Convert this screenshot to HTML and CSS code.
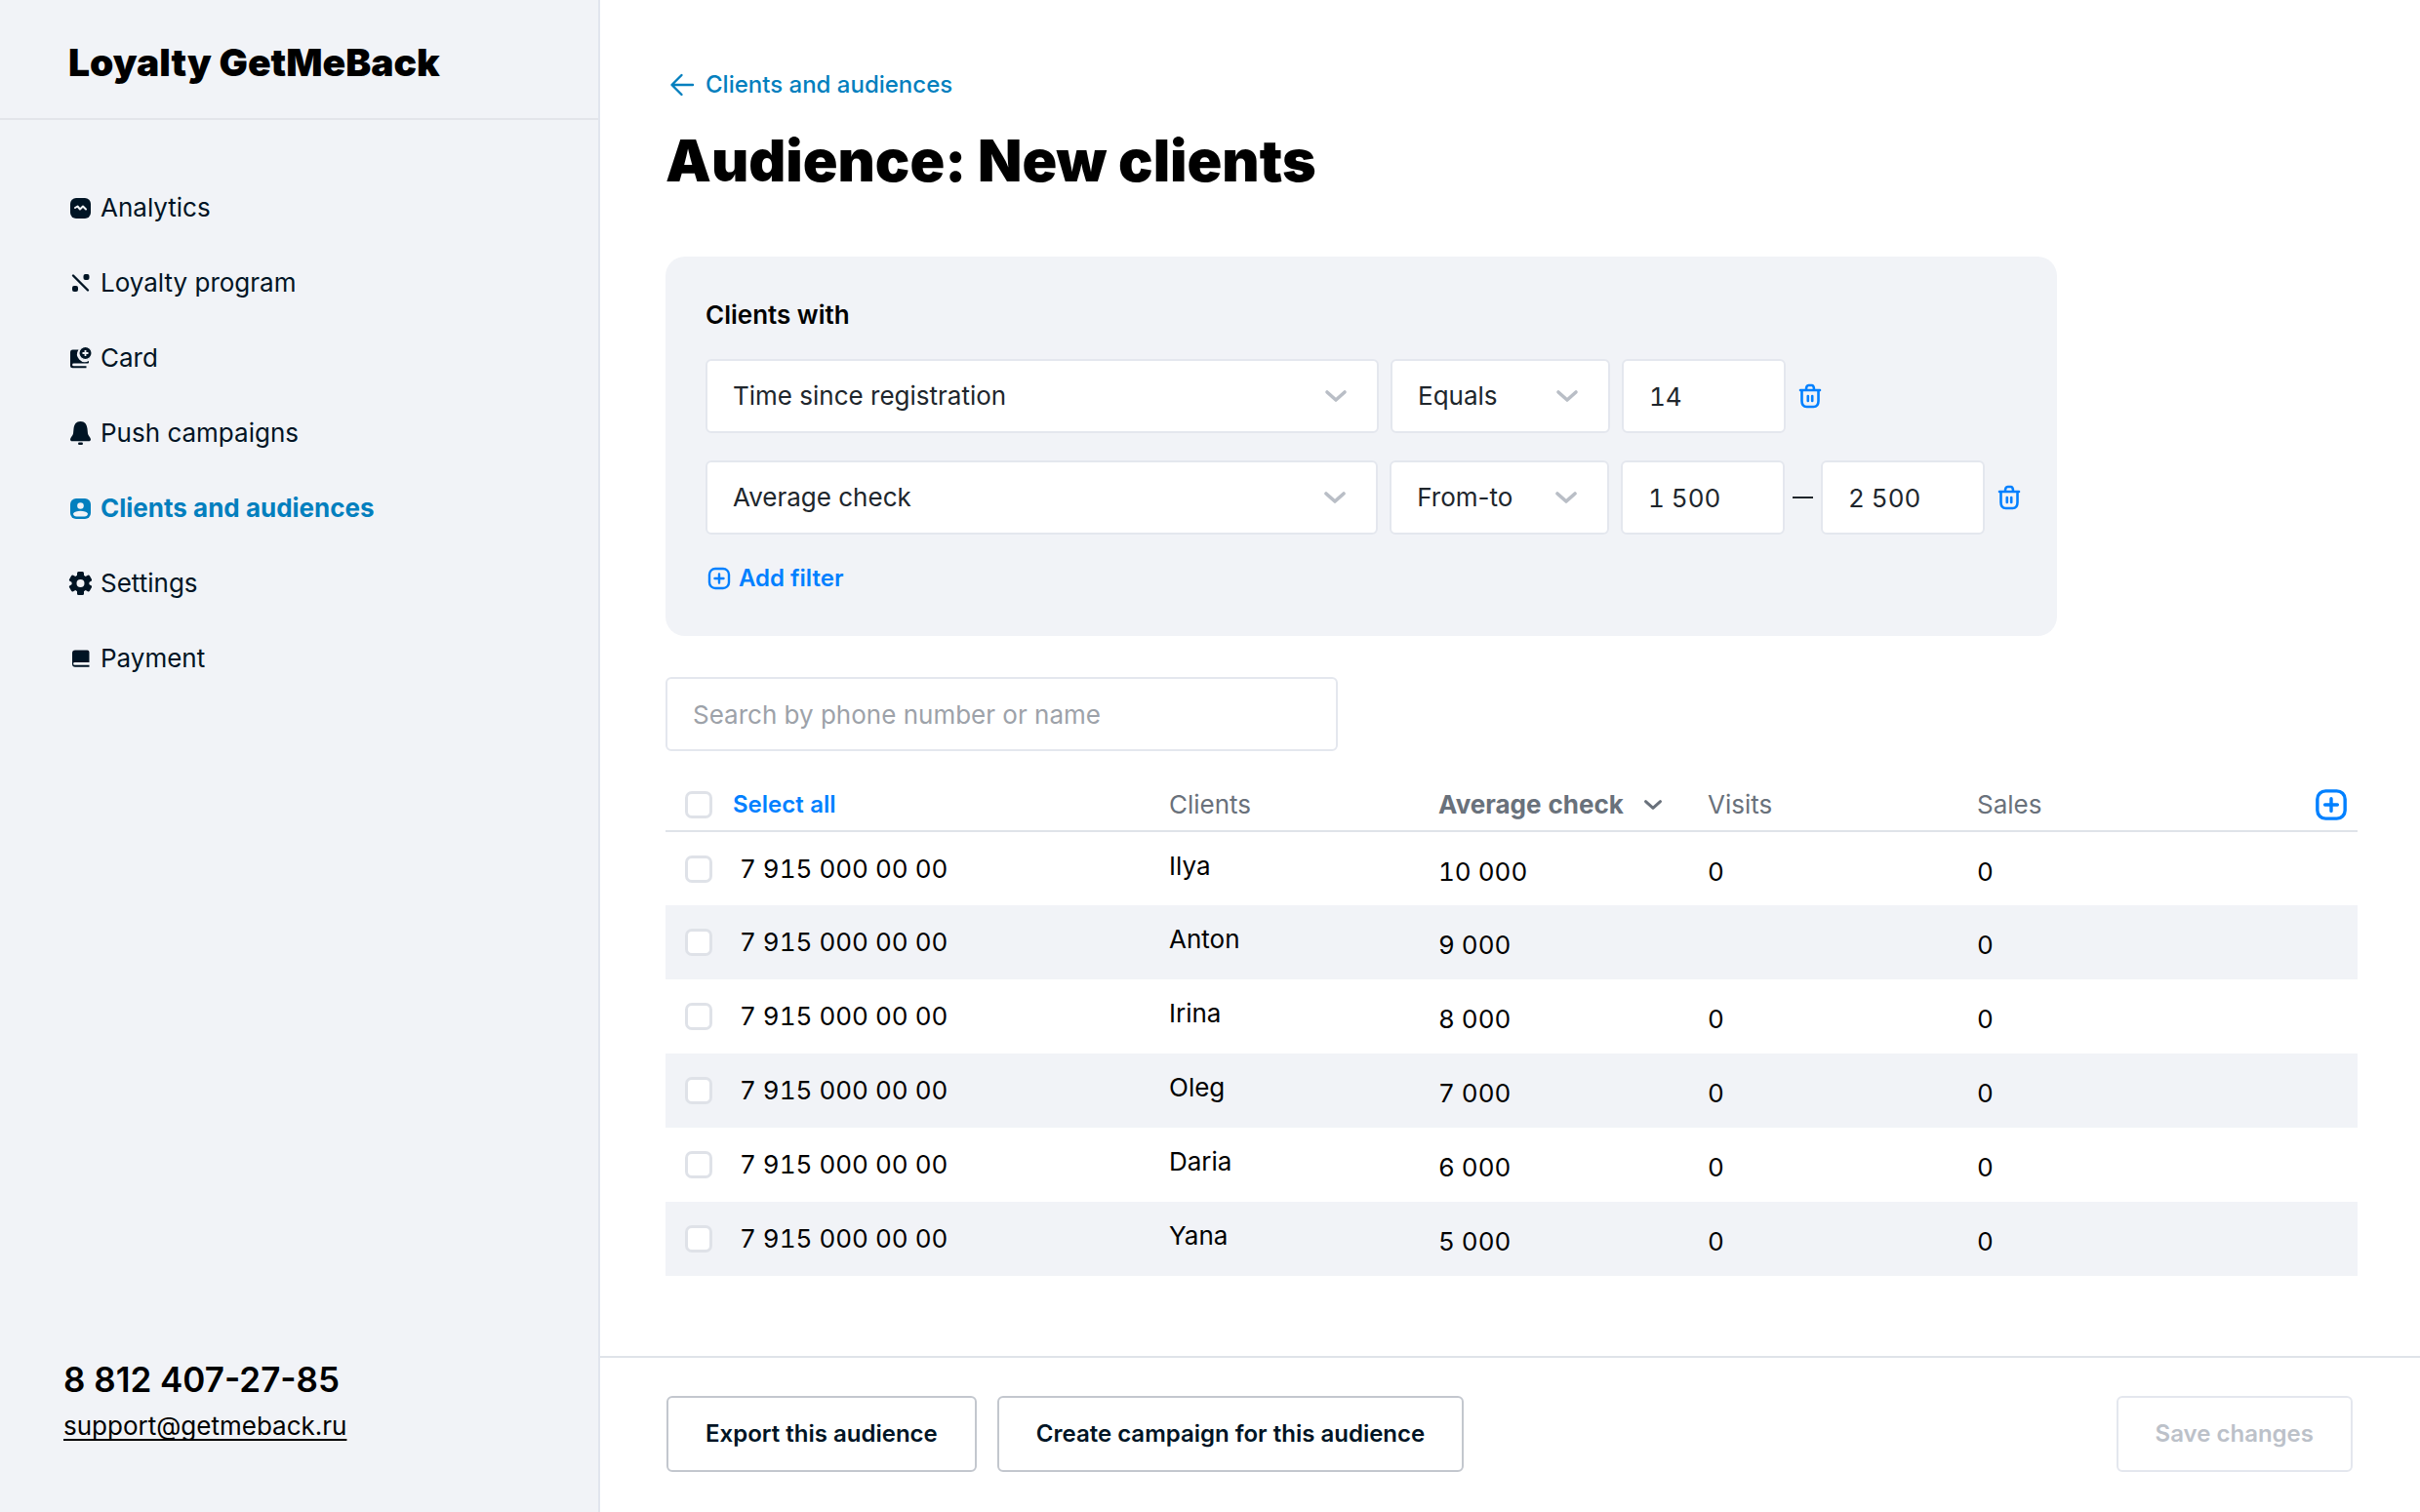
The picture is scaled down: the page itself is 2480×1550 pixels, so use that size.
FILE: index.html
```html
<!DOCTYPE html>
<html lang="en">
<head>
    <meta charset="UTF-8">
    <meta name="viewport" content="width=device-width, initial-scale=1.0">
    <title>Audience: New clients</title>
    <link rel="stylesheet" href="styles.css">
</head>
<body>
    <!-- Shared icons -->
    <svg class="sprite" aria-hidden="true">
        <symbol id="chevron" viewBox="0 0 24 14">
            <path d="M3 3l9 8 9-8" fill="none" stroke="currentColor" stroke-width="3.6" stroke-linecap="round" stroke-linejoin="round"/>
        </symbol>
        <symbol id="plus" viewBox="0 0 24 24">
            <rect x="2" y="2" width="20" height="20" rx="6" fill="none" stroke="currentColor" stroke-width="2.4"/>
            <path d="M12 7.5v9M7.5 12h9" fill="none" stroke="currentColor" stroke-width="2.4" stroke-linecap="round"/>
        </symbol>
        <symbol id="trash" viewBox="0 0 24 26">
            <path d="M2 7h20M3.500 7v11c0 4 1.500 6 5 6h7c3.500 0 5-2 5-6v-11M8 6.500c0-3 .8-4.500 2.500-4.500h3c1.700 0 2.500 1.500 2.500 4.500M9.800 13v5M14.200 13v5" fill="none" stroke="currentColor" stroke-width="2.6" stroke-linecap="round"/>
        </symbol>
    </svg>

    <div class="layout">
        <aside class="sidebar">
            <div class="logo">Loyalty GetMeBack</div>
            <nav class="menu">
                <a class="menu-item" href="#">
                    <svg class="menu-icon" viewBox="0 0 24 24"><rect x="2" y="2" width="21" height="21" rx="6" fill="currentColor"/><path d="M7 12l2.500-1.500 2.500 3 3-3 3 3" fill="none" stroke="#f1f3f7" stroke-width="2" stroke-linecap="round" stroke-linejoin="round"/></svg>
                    Analytics
                </a>
                <a class="menu-item" href="#">
                    <svg class="menu-icon" viewBox="0 0 24 24"><path d="M5 4.500l15 15" stroke="currentColor" stroke-width="2.400" stroke-linecap="round"/><rect x="15.500" y="3" width="6" height="6" rx="2" fill="currentColor"/><rect x="4" y="15" width="6" height="6" rx="2" fill="currentColor"/></svg>
                    Loyalty program
                </a>
                <a class="menu-item" href="#">
                    <svg class="menu-icon" viewBox="0 0 24 24"><path d="M4.500 3.500h6a8 8 0 0 0 10.500 11.500v1.500a1 1 0 0 1-1 1h-14.500a1.300 1.300 0 0 0 0 2.800h13v2h-14a2.500 2.500 0 0 1-2.500-2.500v-14a2.500 2.500 0 0 1 2.500-2.300z" fill="currentColor"/><circle cx="17.500" cy="7" r="6.600" fill="currentColor" stroke="#f1f3f7" stroke-width="1.200"/><path d="M17.500 4v6M14.500 7h6" stroke="#f1f3f7" stroke-width="1.800"/></svg>
                    Card
                </a>
                <a class="menu-item" href="#">
                    <svg class="menu-icon" viewBox="0 0 24 24"><path d="M12.500 0c-4.500 0-6.500 3-7 7.500l-.5 5c-.2 2-3 4-3 6 0 1.200.8 1.800 2 1.800h17c1.200 0 2-.6 2-1.800 0-2-2.800-4-3-6l-.5-5c-.5-4.500-2.500-7.500-7-7.500z" fill="currentColor"/><rect x="10" y="21.500" width="5" height="2.500" rx="1.200" fill="currentColor"/></svg>
                    Push campaigns
                </a>
                <a class="menu-item active" href="#">
                    <svg class="menu-icon" viewBox="0 0 24 24"><rect x="2" y="2" width="21" height="21" rx="6" fill="currentColor"/><circle cx="12.500" cy="9.500" r="3.300" fill="#f1f3f7"/><path d="M5 17.500c2-3.600 13-3.600 15 0 0 2-1.500 3-3.500 3h-8c-2 0-3.500-1-3.500-3z" fill="#f1f3f7"/></svg>
                    Clients and audiences
                </a>
                <a class="menu-item" href="#">
                    <svg class="menu-icon" viewBox="0 0 24 24"><g fill="currentColor"><rect x="9" y="0" width="7" height="24" rx="1.500"/><rect x="9" y="0" width="7" height="24" rx="1.500" transform="rotate(60 12.500 12)"/><rect x="9" y="0" width="7" height="24" rx="1.500" transform="rotate(120 12.500 12)"/><circle cx="12.500" cy="12" r="9"/></g><circle cx="12.500" cy="12" r="4" fill="#f1f3f7"/></svg>
                    Settings
                </a>
                <a class="menu-item" href="#">
                    <svg class="menu-icon" viewBox="0 0 24 24"><path d="M7 3.500h12.500a2 2 0 0 1 2 2v10.500h-15a1.300 1.300 0 0 0 0 2.800h15v2h-14.500a3 3 0 0 1-3-3v-11.300a3 3 0 0 1 3-3z" fill="currentColor"/></svg>
                    Payment
                </a>
            </nav>
            <div class="contacts">
                <div class="phone">8 812 407-27-85</div>
                <a class="email" href="mailto:support@getmeback.ru">support@getmeback.ru</a>
            </div>
        </aside>

        <div class="page">
            <main class="content">
                <a class="back" href="#">
                    <svg class="back-icon" viewBox="0 0 26 24"><path d="M24 12h-21M12.500 2l-10 10 10 10" fill="none" stroke="currentColor" stroke-width="2.400" stroke-linecap="round" stroke-linejoin="round"/></svg>
                    Clients and audiences
                </a>
                <h1 class="title">Audience: New clients</h1>

                <section class="filters">
                    <h2 class="filters-title">Clients with</h2>
                    <div class="filter-row">
                        <div class="select select-wide">
                            <select aria-label="Filter field"><option>Time since registration</option></select>
                            <svg class="select-icon"><use href="#chevron"/></svg>
                        </div>
                        <div class="select">
                            <select aria-label="Condition"><option>Equals</option></select>
                            <svg class="select-icon"><use href="#chevron"/></svg>
                        </div>
                        <input class="field" type="text" value="14" aria-label="Value">
                        <button class="delete" type="button" aria-label="Delete filter"><svg class="delete-icon"><use href="#trash"/></svg></button>
                    </div>
                    <div class="filter-row">
                        <div class="select select-wide">
                            <select aria-label="Filter field"><option>Average check</option></select>
                            <svg class="select-icon"><use href="#chevron"/></svg>
                        </div>
                        <div class="select">
                            <select aria-label="Condition"><option>From-to</option></select>
                            <svg class="select-icon"><use href="#chevron"/></svg>
                        </div>
                        <div class="range">
                            <input class="field" type="text" value="1 500" aria-label="From">
                            <span class="dash"></span>
                            <input class="field" type="text" value="2 500" aria-label="To">
                        </div>
                        <button class="delete" type="button" aria-label="Delete filter"><svg class="delete-icon"><use href="#trash"/></svg></button>
                    </div>
                    <button class="add-filter" type="button">
                        <svg class="add-icon"><use href="#plus"/></svg>
                        Add filter
                    </button>
                </section>

                <input class="field search" type="text" placeholder="Search by phone number or name" aria-label="Search by phone number or name">

                <table class="clients">
                    <colgroup>
                        <col>
                        <col class="col">
                        <col class="col">
                        <col class="col">
                        <col class="col-last">
                    </colgroup>
                    <thead>
                        <tr>
                            <th><label class="check select-all"><input type="checkbox">Select all</label></th>
                            <th>Clients</th>
                            <th><button class="sort" type="button">Average check <svg class="sort-icon"><use href="#chevron"/></svg></button></th>
                            <th>Visits</th>
                            <th><div class="last-head">Sales <button class="add-column" type="button" aria-label="Add column"><svg class="column-icon"><use href="#plus"/></svg></button></div></th>
                        </tr>
                    </thead>
                    <tbody>
                        <tr><td><label class="check"><input type="checkbox">7 915 000 00 00</label></td><td class="name">Ilya</td><td class="num">10 000</td><td class="num">0</td><td class="num">0</td></tr>
                        <tr><td><label class="check"><input type="checkbox">7 915 000 00 00</label></td><td class="name">Anton</td><td class="num">9 000</td><td class="num"></td><td class="num">0</td></tr>
                        <tr><td><label class="check"><input type="checkbox">7 915 000 00 00</label></td><td class="name">Irina</td><td class="num">8 000</td><td class="num">0</td><td class="num">0</td></tr>
                        <tr><td><label class="check"><input type="checkbox">7 915 000 00 00</label></td><td class="name">Oleg</td><td class="num">7 000</td><td class="num">0</td><td class="num">0</td></tr>
                        <tr><td><label class="check"><input type="checkbox">7 915 000 00 00</label></td><td class="name">Daria</td><td class="num">6 000</td><td class="num">0</td><td class="num">0</td></tr>
                        <tr><td><label class="check"><input type="checkbox">7 915 000 00 00</label></td><td class="name">Yana</td><td class="num">5 000</td><td class="num">0</td><td class="num">0</td></tr>
                    </tbody>
                </table>
            </main>

            <footer class="actions">
                <button class="btn" type="button">Export this audience</button>
                <button class="btn" type="button">Create campaign for this audience</button>
                <button class="btn btn-save" type="button" disabled>Save changes</button>
            </footer>
        </div>
    </div>
</body>
</html>
```
FILE: styles.css
```css
* {
    margin: 0;
    padding: 0;
    box-sizing: border-box;
}

body {
    font-family: Inter, "Liberation Sans", sans-serif;
    font-size: 26px;
    line-height: 32px;
    color: #000;
    background-color: #fff;
}

button,
input,
select {
    font: inherit;
    color: inherit;
}

button {
    background: none;
    border: none;
    cursor: pointer;
}

a {
    color: inherit;
    text-decoration: none;
}

.sprite {
    display: none;
}

.layout {
    display: flex;
    min-height: 100vh;
}

/* Sidebar */

.sidebar {
    display: flex;
    flex-direction: column;
    flex: none;
    width: 615px;
    background-color: #f1f3f7;
    border-right: 2px solid #e1e5ee;
}

.logo {
    padding: 40px 70px 33px;
    border-bottom: 2px solid #e3e5ea;
    font-size: 39px;
    font-weight: 900;
    line-height: 48px;
}

.menu {
    display: flex;
    flex-direction: column;
    gap: 45px;
    padding: 74px 70px;
}

.menu-item {
    display: flex;
    align-items: center;
    gap: 9px;
    color: #001424;
}

.menu-icon {
    width: 24px;
    height: 24px;
}

.menu-item.active {
    color: #037fbe;
    font-weight: 700;
}

.contacts {
    margin-top: auto;
    padding: 0 65px 72px;
}

.phone {
    margin-bottom: 12px;
    font-size: 35px;
    font-weight: 600;
    line-height: 40px;
}

.email {
    text-decoration: underline;
    text-decoration-thickness: 2px;
    text-underline-offset: 4px;
    text-decoration-skip-ink: none;
}

/* Page */

.page {
    display: flex;
    flex-direction: column;
    flex: 1;
    min-width: 0;
}

.content {
    flex: 1;
    padding: 71px 64px 46px 67px;
}

.back {
    display: flex;
    align-items: center;
    gap: 11px;
    padding-left: 4px;
    color: #037fbe;
    font-size: 24px;
    font-weight: 500;
}

.back-icon {
    width: 26px;
    height: 24px;
}

.title {
    margin: 26px 0 62px;
    font-size: 59px;
    font-weight: 900;
    line-height: 72px;
}

/* Filters */

.filters {
    max-width: 1426px;
    margin-bottom: 42px;
    padding: 44px 36px 43px 41px;
    background-color: #f1f3f7;
    border-radius: 20px;
}

.filters-title {
    margin-bottom: 29px;
    font-size: 26px;
    font-weight: 600;
}

.filter-row {
    display: flex;
    align-items: center;
    gap: 12px;
    margin-bottom: 28px;
}

.select {
    display: grid;
    align-items: center;
    width: 225px;
}

.select-wide {
    width: 690px;
}

.select select,
.select-icon {
    grid-area: 1 / 1;
}

.select-icon {
    justify-self: end;
    width: 24px;
    height: 14px;
    margin-right: 32px;
    color: #b9bec6;
    pointer-events: none;
}

.select select,
.field {
    width: 100%;
    height: 76px;
    padding: 0 26px;
    appearance: none;
    color: #20262c;
    background-color: #fff;
    border: 2px solid #e4e7ee;
    border-radius: 6px;
}

.filter-row .field {
    width: 168px;
    font-variant-numeric: tabular-nums;
}

.range {
    display: flex;
    align-items: center;
    gap: 8px;
}

.dash {
    width: 21px;
    height: 2px;
    background-color: #20262c;
}

.delete {
    display: flex;
    color: #0080ff;
}

.delete-icon {
    width: 26px;
    height: 26px;
}

.add-filter {
    display: flex;
    align-items: center;
    gap: 8px;
    margin-top: 29px;
    padding-left: 2px;
    color: #0080ff;
    font-size: 24px;
    font-weight: 600;
}

.add-icon {
    width: 24px;
    height: 24px;
}

.search {
    display: block;
    max-width: 689px;
}

.search::placeholder {
    color: #9da2a9;
}

/* Clients table */

.clients {
    width: 100%;
    margin-top: 26px;
    table-layout: fixed;
    border-collapse: collapse;
    font-variant-numeric: tabular-nums;
}

.col {
    width: 276px;
}

.col-last {
    width: 390px;
}

.clients th {
    height: 56px;
    padding-top: 2px;
    border-bottom: 2px solid #dfe3e9;
    color: #69717b;
    font-weight: 400;
    text-align: left;
}

.clients td {
    height: 76px;
}

.clients tbody tr:nth-child(even) {
    background-color: #f1f3f7;
}

.clients .name {
    padding-bottom: 6px;
}

.clients .num {
    padding-top: 6px;
}

.check {
    display: flex;
    align-items: center;
    gap: 28px;
    padding-left: 20px;
}

.check input {
    width: 28px;
    height: 28px;
    appearance: none;
    background-color: #fff;
    border: 3px solid #dfe2e8;
    border-radius: 7px;
}

.check input:checked {
    background-color: #0080ff;
}

.select-all {
    gap: 21px;
    color: #0080ff;
    font-size: 24px;
    font-weight: 600;
}

.sort {
    display: flex;
    align-items: center;
    gap: 20px;
    font-weight: 700;
}

.sort-icon {
    width: 20px;
    height: 12px;
}

.last-head {
    display: flex;
    align-items: center;
    justify-content: space-between;
    padding-right: 10px;
}

.add-column {
    display: flex;
    color: #0080ff;
}

.column-icon {
    width: 34px;
    height: 34px;
}

/* Bottom actions */

.actions {
    display: flex;
    gap: 21px;
    padding: 39px 69px 41px 68px;
    border-top: 2px solid #dfe3e9;
}

.btn {
    height: 78px;
    padding: 0 38px;
    color: #001424;
    border: 2px solid #c3c7ce;
    border-radius: 6px;
    font-size: 24px;
    font-weight: 600;
}

.btn-save {
    margin-left: auto;
    color: #bcc1c9;
    border-color: #e4e7ee;
    cursor: default;
}
```
